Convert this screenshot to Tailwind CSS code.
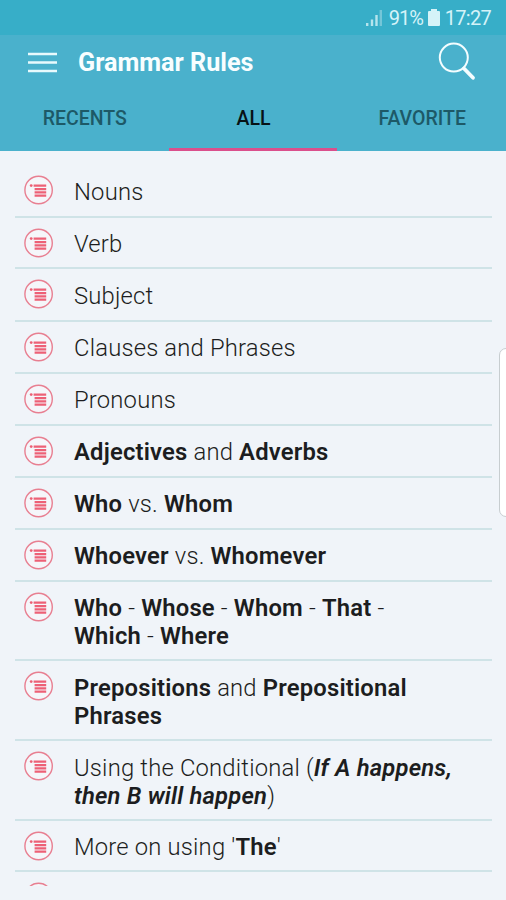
<!DOCTYPE html>
<html lang="en">
<head>
<meta charset="utf-8">
<title>Grammar Rules</title>
<script src="https://cdn.jsdelivr.net/npm/@tailwindcss/browser@4"></script>
</head>
<body class="w-[506px] h-[900px] overflow-hidden bg-[#f0f4f9] font-[Roboto,sans-serif]">
<svg class="hidden">
  <symbol id="item" viewBox="0 0 30 30">
    <circle cx="14.6" cy="15" r="13.7" fill="#f5f6fa" stroke="#e87f91" stroke-width="1.4"/>
    <path d="M9.6 10.7H22.2M10.6 14.2H22.2M10.6 17.3H22.2M10.6 20.6H22.2" stroke="#ed6076" stroke-width="2.3"/>
    <circle cx="7.2" cy="10.6" r="1.4" fill="#ec5f73"/>
  </symbol>
</svg>
<div class="relative w-full h-full flex flex-col">
  <div class="h-[35px] shrink-0 bg-[#37aec8] flex items-center justify-end pr-[15px] text-[#d5f3f8]">
    <svg class="w-[18px] h-[18px] mr-[6px]" viewBox="0 0 18 18" fill="none" stroke-width="2.4">
      <path d="M2.2 17V14M7 17V10.5M11.5 17V6" stroke="#b5e4ed"/><path d="M15.8 17V1" stroke="#74c6d8"/>
    </svg>
    <span class="text-[20px] leading-none tracking-[-0.9px] w-[34px] whitespace-nowrap">91%</span>
    <svg class="w-[12px] h-[17px] ml-[5px] mr-[5px]" viewBox="0 0 12 17" fill="#d5f3f8"><path d="M3 0H9V2H11Q12 2 12 3V16Q12 17 11 17H1Q0 17 0 16V3Q0 2 1 2H3Z"/></svg>
    <span class="text-[20px] leading-none tracking-[-0.7px] whitespace-nowrap">17:27</span>
  </div>
  <div class="h-[116px] shrink-0 bg-[#4ab1cc] flex flex-col">
    <div class="h-[55px] flex items-center pl-[28px] pr-[30px]">
      <svg class="w-[29px] h-[22px]" viewBox="0 0 29 22" stroke="#e8fafd" stroke-width="2.4"><path d="M0 2H29M0 10.5H29M0 19H29"/></svg>
      <h1 class="ml-[21px] text-[25.2px] leading-[30px] font-bold text-[#f8feff] whitespace-nowrap">Grammar Rules</h1>
      <svg class="ml-auto w-[38px] h-[40px] -mt-[2px]" viewBox="0 0 38 40" fill="none" stroke="#f4fdff"><circle cx="15.8" cy="15.6" r="14" stroke-width="2"/><path d="M26 26.5L35 35.8" stroke-width="3.8" stroke-linecap="round"/></svg>
    </div>
    <div class="flex-1 grid grid-cols-3 text-center text-[19.5px] font-medium text-[#1d5967] leading-[58px]">
      <div class="pl-px">RECENTS</div>
      <div class="pl-px text-[#071215] border-b-[3px] border-[#da4f8c]">ALL</div>
      <div class="pl-px">FAVORITE</div>
    </div>
  </div>
  <ul class="ml-[15px] w-[477px] h-[735px] pt-[14px] overflow-hidden text-[23.8px] leading-[27.7px] tracking-[0.19px] font-light text-[#1c1d20] [&_b]:font-semibold [&_li]:flex [&_li]:items-start [&_li]:border-b-2 [&_li]:border-[#cfe3e7] [&_li]:shrink-0 [&_svg]:w-[30px] [&_svg]:h-[30px] [&_svg]:ml-[9px] [&_svg]:mr-[20px] [&_svg]:mt-[10px] [&_svg]:shrink-0 [&_p]:pt-[13px] [&_p]:whitespace-nowrap flex flex-col">
    <li class="h-[53px]"><svg><use href="#item"/></svg><p class="relative top-px">Nouns</p></li>
    <li class="h-[51px]"><svg><use href="#item"/></svg><p>Verb</p></li>
    <li class="h-[53px]"><svg><use href="#item"/></svg><p class="relative top-px">Subject</p></li>
    <li class="h-[52px]"><svg><use href="#item"/></svg><p>Clauses and Phrases</p></li>
    <li class="h-[52px]"><svg><use href="#item"/></svg><p>Pronouns</p></li>
    <li class="h-[52px]"><svg><use href="#item"/></svg><p><b>Adjectives</b> and <b>Adverbs</b></p></li>
    <li class="h-[52px]"><svg><use href="#item"/></svg><p><b>Who</b> vs. <b>Whom</b></p></li>
    <li class="h-[52px]"><svg><use href="#item"/></svg><p><b>Whoever</b> vs. <b>Whomever</b></p></li>
    <li class="h-[79px]"><svg><use href="#item"/></svg><p><b>Who</b> - <b>Whose</b> - <b>Whom</b> - <b>That</b> -<br><b>Which</b> - <b>Where</b></p></li>
    <li class="h-[80px]"><svg><use href="#item"/></svg><p class="relative top-px"><b>Prepositions</b> and <b>Prepositional<br>Phrases</b></p></li>
    <li class="h-[80px]"><svg><use href="#item"/></svg><p class="relative top-px">Using the Conditional (<b class="italic">If A happens,<br>then B will happen</b>)</p></li>
    <li class="h-[51px]"><svg><use href="#item"/></svg><p>More on using '<b>The</b>'</p></li>
    <li class="h-[52px]"><svg><use href="#item"/></svg></li>
  </ul>
  <div class="absolute left-[499px] top-[348px] w-[14px] h-[169px] rounded-[7px] border border-[#c7cdd0] bg-white"></div>
</div>
</body>
</html>
